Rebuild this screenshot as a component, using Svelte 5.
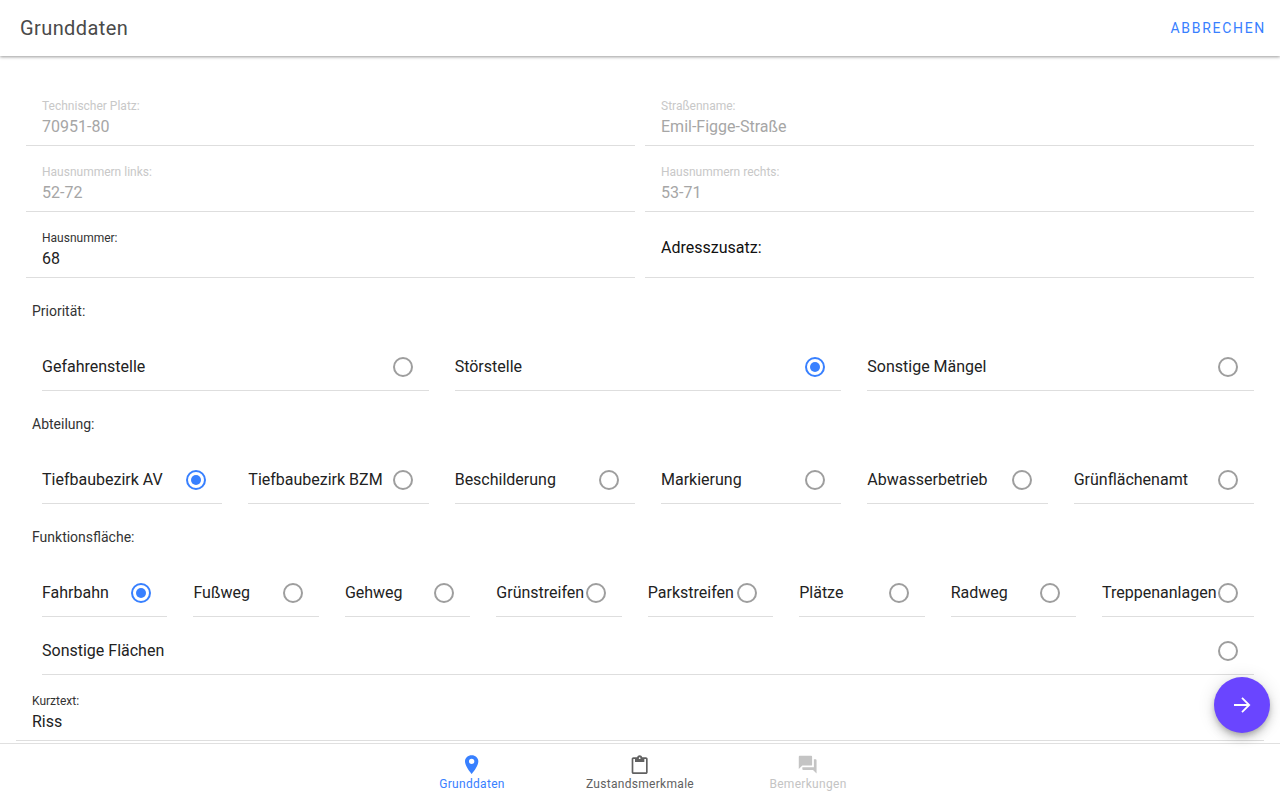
<script>
  const readonly1 = [
    { label: 'Technischer Platz:', value: '70951-80', state: 'off' },
    { label: 'Straßenname:', value: 'Emil-Figge-Straße', state: 'off' },
    { label: 'Hausnummern links:', value: '52-72', state: 'off' },
    { label: 'Hausnummern rechts:', value: '53-71', state: 'off' },
    { label: 'Hausnummer:', value: '68', state: 'on' },
    { label: 'Adresszusatz:', value: '', state: 'on' }
  ];
  const groups = [
    { title: 'Priorität:', cls: 'three', selected: 'Störstelle', items: ['Gefahrenstelle', 'Störstelle', 'Sonstige Mängel'] },
    { title: 'Abteilung:', cls: 'six', selected: 'Tiefbaubezirk AV', items: ['Tiefbaubezirk AV', 'Tiefbaubezirk BZM', 'Beschilderung', 'Markierung', 'Abwasserbetrieb', 'Grünflächenamt'] },
    { title: 'Funktionsfläche:', cls: 'eight', selected: 'Fahrbahn', items: ['Fahrbahn', 'Fußweg', 'Gehweg', 'Grünstreifen', 'Parkstreifen', 'Plätze', 'Radweg', 'Treppenanlagen', 'Sonstige Flächen'] }
  ];
</script>

<div class="page">
  <header class="bar">
    <h1>Grunddaten</h1>
    <button class="cancel">ABBRECHEN</button>
  </header>

  <main class="content">
    <section class="fields">
      {#each readonly1 as f}
        <div class="field {f.state}" class:empty={!f.value}>
          <span class="flabel">{f.label}</span>
          {#if f.value}<span class="fvalue">{f.value}</span>{/if}
        </div>
      {/each}
    </section>

    {#each groups as g}
      <section class="group">
        <div class="gtitle">{g.title}</div>
        <div class="options {g.cls}">
          {#each g.items as item}
            <div class="opt">
              <span class="otext">{item}</span>
              <span class="radio" class:checked={item === g.selected}></span>
            </div>
          {/each}
        </div>
      </section>
    {/each}

    <div class="kurz">
      <span class="flabel">Kurztext:</span>
      <span class="fvalue">Riss</span>
    </div>
  </main>

  <button class="fab" aria-label="Weiter">
    <svg viewBox="0 0 24 24" width="24" height="24"><path d="M4 12h15.5M12 4.8l7.2 7.2-7.2 7.2" fill="none" stroke="#fff" stroke-width="1.8"/></svg>
  </button>

  <nav class="tabs">
    <div class="tab active">
      <svg viewBox="0 0 512 512"><path d="M256 32C167.67 32 96 96.51 96 176c0 128 160 304 160 304s160-176 160-304c0-79.49-71.67-144-160-144zm0 208a64 64 0 1 1 0-128 64 64 0 0 1 0 128z"/></svg>
      <span>Grunddaten</span>
    </div>
    <div class="tab">
      <svg viewBox="0 0 512 512"><path d="M405.333 80h-87.35C310.879 52.396 285.821 32 256 32s-54.879 20.396-61.983 48h-87.35C83.198 80 64 99.198 64 122.667v314.665C64 460.801 83.198 480 106.667 480h298.666C428.802 480 448 460.801 448 437.332V122.667C448 99.198 428.802 80 405.333 80zM256 80c11.729 0 21.333 9.599 21.333 21.333s-9.604 21.334-21.333 21.334-21.333-9.6-21.333-21.334S244.271 80 256 80zm152 360H104V120h40v72h224v-72h40v320z"/></svg>
      <span>Zustandsmerkmale</span>
    </div>
    <div class="tab disabled">
      <svg viewBox="0 0 24 24"><path d="M21 6h-2v9H6v2c0 .55.45 1 1 1h11l4 4V7c0-.55-.45-1-1-1zm-4 6V3c0-.55-.45-1-1-1H3c-.55 0-1 .45-1 1v14l4-4h10c.55 0 1-.45 1-1z"/></svg>
      <span>Bemerkungen</span>
    </div>
  </nav>
</div>

<style>
  :global(body) { margin: 0; background: #fff; }
  .page {
    position: relative;
    width: 1280px;
    height: 800px;
    overflow: hidden;
    display: flex;
    flex-direction: column;
    font-family: Roboto, sans-serif;
    color: #000;
  }
  .bar {
    height: 56px;
    flex: none;
    box-sizing: border-box;
    display: flex;
    align-items: center;
    justify-content: space-between;
    padding: 0 14px 0 20px;
    background: #fff;
    box-shadow: 0 1px 3px rgba(0, 0, 0, 0.4);
    position: relative;
    z-index: 1;
  }
  h1 {
    margin: 0;
    font-size: 20px;
    font-weight: 400;
    letter-spacing: 0.4px;
    color: #4a4a4a;
  }
  .cancel {
    border: 0;
    background: none;
    padding: 0;
    font: 400 14px Roboto, sans-serif;
    letter-spacing: 1.7px;
    color: #3880ff;
  }
  .content {
    flex: 1;
    min-height: 0;
    padding-top: 24px;
    box-sizing: border-box;
  }
  .fields {
    display: grid;
    grid-template-columns: 1fr 1fr;
    column-gap: 10px;
    margin: 0 26px;
  }
  .field {
    height: 66px;
    box-sizing: border-box;
    border-bottom: 1px solid #dedede;
    padding: 19px 16px 0;
    display: flex;
    flex-direction: column;
  }
  .flabel {
    font-size: 12px;
    line-height: 14px;
    color: #333;
  }
  .fvalue {
    font-size: 16px;
    line-height: 20px;
    margin-top: 4px;
    color: #222;
  }
  .field.off .flabel { color: #c8c8c8; }
  .field.off .fvalue { color: #a6a6a6; }
  .field.empty .flabel {
    font-size: 16px;
    line-height: 20px;
    margin-top: 7px;
    color: #111;
  }
  .gtitle {
    height: 55px;
    box-sizing: border-box;
    padding: 25px 0 0 32px;
    font-size: 14px;
    line-height: 16px;
    color: #333;
  }
  .options {
    display: grid;
    column-gap: 26px;
    margin: 0 26px 0 42px;
  }
  .three { grid-template-columns: repeat(3, 1fr); }
  .six { grid-template-columns: repeat(6, 1fr); }
  .eight { grid-template-columns: repeat(7, 125.45px) 1fr; }
  .opt {
    height: 58px;
    box-sizing: border-box;
    border-bottom: 1px solid #dedede;
    display: flex;
    align-items: center;
    justify-content: space-between;
    padding: 9px 16px 0 0;
    min-width: 0;
  }
  .eight .opt:last-child {
    grid-column: 1 / -1;
  }
  .otext {
    font-size: 16px;
    white-space: nowrap;
    color: #222;
  }
  .radio {
    flex: none;
    width: 20px;
    height: 20px;
    box-sizing: border-box;
    border: 2px solid #9e9e9e;
    border-radius: 50%;
    position: relative;
    top: 1px;
  }
  .radio.checked { border-color: #3880ff; }
  .radio.checked::after {
    content: '';
    position: absolute;
    inset: 3px;
    border-radius: 50%;
    background: #3880ff;
  }
  .kurz {
    height: 66px;
    box-sizing: border-box;
    margin: 0 16px;
    padding: 19px 16px 0;
    border-bottom: 1px solid #dedede;
    display: flex;
    flex-direction: column;
  }
  .fab {
    position: absolute;
    left: 1214px;
    top: 677px;
    width: 56px;
    height: 56px;
    padding: 0;
    border: 0;
    border-radius: 50%;
    background: #6a45ff;
    display: flex;
    align-items: center;
    justify-content: center;
    box-shadow: 0 3px 5px -1px rgba(0,0,0,.2), 0 6px 10px 0 rgba(0,0,0,.14), 0 1px 18px 0 rgba(0,0,0,.12);
  }
  .tabs {
    flex: none;
    height: 57px;
    box-sizing: border-box;
    border-top: 1px solid #e0e0e0;
    display: flex;
    justify-content: center;
    background: #fff;
  }
  .tab {
    width: 168px;
    display: flex;
    flex-direction: column;
    align-items: center;
    padding-top: 10px;
    box-sizing: border-box;
    font-size: 12px;
    font-weight: 400;
    letter-spacing: 0.3px;
    color: #616161;
  }
  .tab svg { fill: currentColor; display: block; width: 21.33px; height: 21.33px; }
  .tab span { margin-top: 1px; line-height: 16px; }
  .tab.active { color: #3880ff; }
  .tab.disabled { color: #c4c4c4; }
</style>
